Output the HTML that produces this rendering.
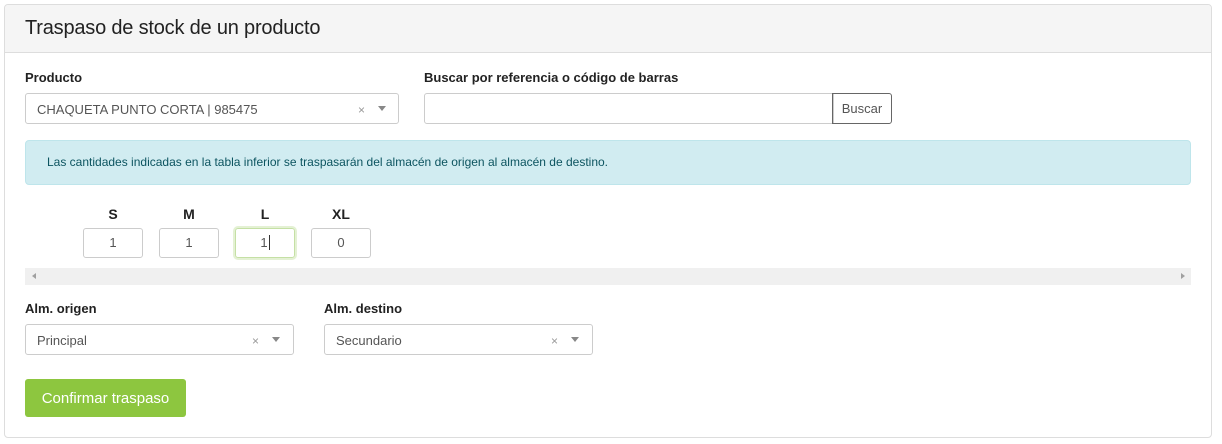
<!DOCTYPE html>
<html><head><meta charset="utf-8"><style>
*{box-sizing:border-box;margin:0;padding:0}
body{width:1222px;height:444px;background:#fff;font-family:"Liberation Sans",sans-serif;position:relative;overflow:hidden;color:#333}
.a{position:absolute}
.panel{left:4px;top:4px;width:1208px;height:434px;border:1px solid #ddd;border-radius:4px}
.hdr{left:5px;top:5px;width:1206px;height:48px;background:#f5f5f5;border-bottom:1px solid #ddd;border-radius:3px 3px 0 0}
.title{left:25px;top:17px;font-size:20px;color:#222;letter-spacing:-0.2px}
.lbl{font-size:13px;font-weight:bold;color:#222}
.box{border:1px solid #ccc;border-radius:3px;background:#fff;font-size:13px;color:#555;padding-left:11px;line-height:31px}
.x{font-size:12px;color:#999}
.car{width:0;height:0;border-left:4px solid transparent;border-right:4px solid transparent;border-top:5px solid #888}
.num{width:60px;height:30px;border:1px solid #ccc;border-radius:3px;text-align:center;line-height:28px;font-size:13px;color:#555}
.sz{font-size:14px;font-weight:bold;color:#222;width:60px;text-align:center}
</style></head><body>
<div class="a panel"></div>
<div class="a hdr"></div>
<div class="a title">Traspaso de stock de un producto</div>

<div class="a lbl" style="left:25px;top:70px">Producto</div>
<div class="a box" style="left:25px;top:93px;width:374px;height:31px">CHAQUETA PUNTO CORTA | 985475</div>
<div class="a x" style="left:358px;top:103px">×</div>
<div class="a car" style="left:378px;top:106px"></div>

<div class="a lbl" style="left:424px;top:70px">Buscar por referencia o código de barras</div>
<div class="a box" style="left:424px;top:93px;width:410px;height:31px;border-radius:3px 0 0 3px"></div>
<div class="a" style="left:832px;top:93px;width:60px;height:31px;border:1px solid #666;border-radius:0 3px 3px 0;font-size:13px;color:#555;text-align:center;line-height:30px">Buscar</div>

<div class="a" style="left:25px;top:140px;width:1166px;height:45px;background:#d1ecf1;border:1px solid #bee5eb;border-radius:4px;font-size:12px;color:#0c5460;padding-left:21px;line-height:43px">Las cantidades indicadas en la tabla inferior se traspasarán del almacén de origen al almacén de destino.</div>

<div class="a sz" style="left:83px;top:206px">S</div>
<div class="a sz" style="left:159px;top:206px">M</div>
<div class="a sz" style="left:235px;top:206px">L</div>
<div class="a sz" style="left:311px;top:206px">XL</div>
<div class="a num" style="left:83px;top:228px">1</div>
<div class="a num" style="left:159px;top:228px">1</div>
<div class="a num" style="left:235px;top:228px;border-color:#c5e0a5;box-shadow:0 0 0 2px #e4f1d4">1<span style="border-left:1px solid #333;margin-left:1px"></span></div>
<div class="a num" style="left:311px;top:228px">0</div>

<div class="a" style="left:25px;top:268px;width:1166px;height:17px;background:#f0f0f0"></div>
<div class="a" style="left:32px;top:273px;width:0;height:0;border-top:3px solid transparent;border-bottom:3px solid transparent;border-right:4px solid #a0a0a0"></div>
<div class="a" style="left:1181px;top:273px;width:0;height:0;border-top:3px solid transparent;border-bottom:3px solid transparent;border-left:4px solid #a0a0a0"></div>

<div class="a lbl" style="left:25px;top:301px">Alm. origen</div>
<div class="a box" style="left:25px;top:324px;width:269px;height:31px">Principal</div>
<div class="a x" style="left:252px;top:334px">×</div>
<div class="a car" style="left:272px;top:337px"></div>

<div class="a lbl" style="left:324px;top:301px">Alm. destino</div>
<div class="a box" style="left:324px;top:324px;width:269px;height:31px">Secundario</div>
<div class="a x" style="left:551px;top:334px">×</div>
<div class="a car" style="left:571px;top:337px"></div>

<div class="a" style="left:25px;top:379px;width:161px;height:38px;background:#8dc63f;border-radius:3px;color:#fff;font-size:15px;text-align:center;line-height:39px">Confirmar traspaso</div>
</body></html>
